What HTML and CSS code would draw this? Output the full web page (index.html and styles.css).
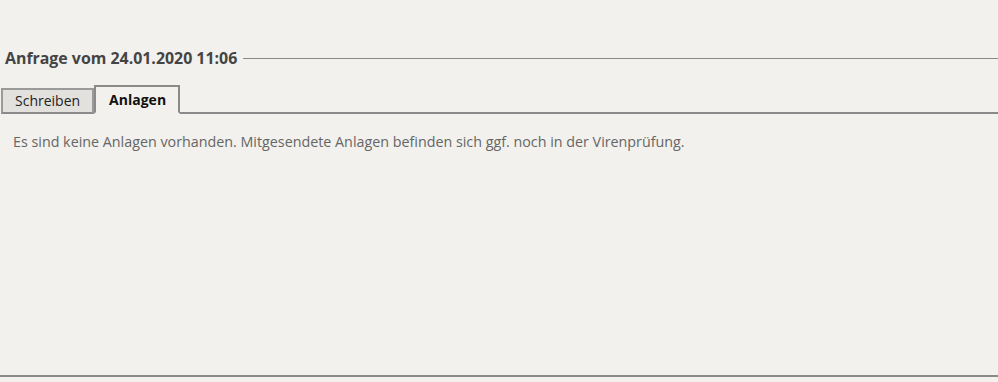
FILE: index.html
```html
<!DOCTYPE html>
<html lang="de">
<head>
    <meta charset="UTF-8">
    <title>Anfrage</title>
    <link rel="stylesheet" href="styles.css">
</head>
<body>

<div class="page">
    <!-- Anfrage -->
    <div class="request">
        <div class="request-title">
            <span>Anfrage vom 24.01.2020 11:06</span>
            <span class="rule"></span>
        </div>

        <div class="tabs">
            <div class="tab">Schreiben</div>
            <div class="tab active">Anlagen</div>
            <div class="tab-fill"></div>
        </div>

        <div class="tab-content">
            <p>Es sind keine Anlagen vorhanden. Mitgesendete Anlagen befinden sich ggf. noch in der Virenprüfung.</p>
        </div>
    </div>
</div>

</body>
</html>
```

FILE: styles.css
```css
html, body {
    margin: 0;
    padding: 0;
    background: #f2f1ed;
}

body {
    font-family: 'Open Sans', 'Noto Sans', sans-serif;
    color: #555;
}

.page {
    height: 382px;
    box-sizing: border-box;
    border-bottom: 5px solid #f2f1ed;
    display: flex;
    flex-direction: column;
}

.request {
    flex: 1;
    padding-top: 47px;
    border-bottom: 2px solid #8a8a8a;
}

.request-title {
    display: flex;
    align-items: center;
    gap: 6px;
    padding-left: 5px;
    font-size: 15.9px;
    font-weight: bold;
    color: #444;
    height: 22px;
}

.rule {
    flex: 1;
    border-top: 1px solid #8a8a8a;
}

.tabs {
    display: flex;
    align-items: flex-end;
    margin-top: 16px;
    padding-left: 1px;
}

.tab {
    font-size: 14px;
    color: #222;
    height: 22px;
    line-height: 21px;
    padding: 0 12px;
    background: #e2e1de;
    border: 2px solid #9a9a9a;
    border-bottom: 2px solid #8a8a8a;
}

.tab.active {
    height: 25px;
    line-height: 25px;
    padding: 0 12px 0 13px;
    font-weight: bold;
    color: #111;
    background: #f2f1ed;
    border-color: #8a8a8a;
    border-bottom: 2px solid #f2f1ed;
}

.tab-fill {
    flex: 1;
    border-bottom: 2px solid #8a8a8a;
}

.tab-content p {
    margin: 18px 0 0 13px;
    font-size: 14.3px;
    color: #666;
}
```
